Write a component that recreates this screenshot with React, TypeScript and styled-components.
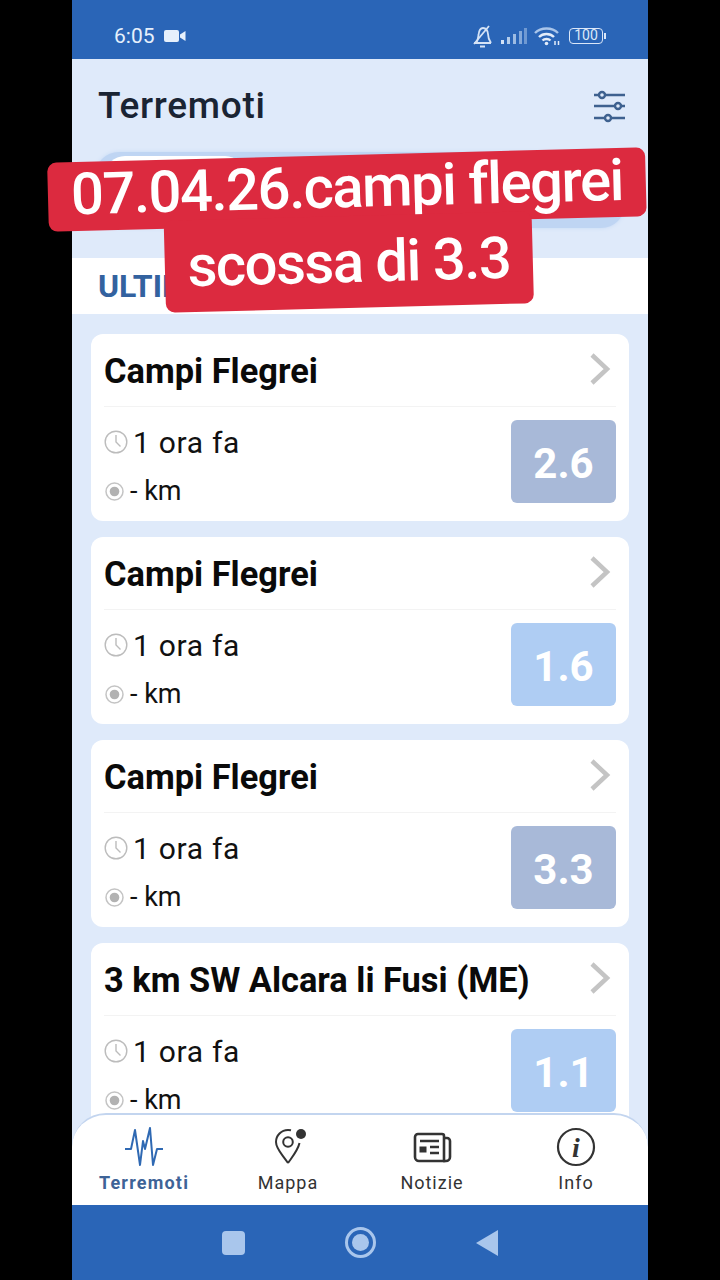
import { createGlobalStyle, styled } from 'styled-components';

const GlobalStyle = createGlobalStyle`
  html, body {
    margin: 0;
    padding: 0;
    background: #000;
    font-family: Roboto, "Liberation Sans", sans-serif;
  }
`;

const quakes = [
  { place: 'Campi Flegrei', value: '2.6', level: 'mid' },
  { place: 'Campi Flegrei', value: '1.6', level: 'low' },
  { place: 'Campi Flegrei', value: '3.3', level: 'mid' },
  { place: '3 km SW Alcara li Fusi (ME)', value: '1.1', level: 'low' },
];

function App() {
  return (
    <Screen>
      <GlobalStyle />
      <Phone>
        <StatusBar>
          <StatusLeft>
            <Clock>6:05</Clock>
            <svg width="22" height="14" viewBox="0 0 22 14">
              <rect x="0" y="1" width="15" height="12" rx="2" fill="#e6f0fc" />
              <path d="M16 5.500 21.500 2v10L16 8.500z" fill="#e6f0fc" />
            </svg>
          </StatusLeft>
          <StatusRight>
            <svg width="24" height="24" viewBox="0 0 24 24" fill="none" stroke="#d5e3f6" strokeWidth="1.800">
              <path d="M4 19h17M6 19c2-2 2-5 2.500-8C9 6 11 4 13 4c3 0 5 3 5 6 0 3 1 6 3 9M10 22.500h5" />
              <path d="M4 20 19 2" />
            </svg>
            <svg width="26" height="16" viewBox="0 0 26 16">
              <rect x="0" y="12" width="3" height="4" fill="#d3e2f6" />
              <rect x="6" y="9" width="3" height="7" fill="#b4cdec" />
              <rect x="12" y="6" width="3" height="10" fill="#9dbce3" />
              <rect x="18" y="3" width="3" height="13" fill="#84a9da" />
              <rect x="23" y="0" width="3" height="16" fill="#6f99d2" />
            </svg>
            <svg width="26" height="20" viewBox="0 0 26 20" fill="none" stroke="#e2ecfa" strokeWidth="2.400">
              <path d="M1 7c6-6 17-6 23 0" stroke="#a9c5ea" />
              <path d="M5 11c4-4 11-4 15 0" />
              <path d="M8.500 14.500c2-2 6-2 8 0" />
              <circle cx="12.500" cy="17.500" r="1.800" fill="#e2ecfa" stroke="none" />
              <path d="M21 15v4M24.500 15v4" strokeWidth="1.500" />
            </svg>
            <Battery>
              <BatteryBody>100</BatteryBody>
              <BatteryTip />
            </Battery>
          </StatusRight>
        </StatusBar>

        <Content>
          <Header>
            <Title>Terremoti</Title>
            <svg width="36" height="36" viewBox="0 0 36 36" fill="none" stroke="#3e618f" strokeWidth="2.400">
              <path d="M2 7h5M13 7h20M2 18h21M29 18h4M2 30h11M19 30h14" />
              <circle cx="10" cy="7" r="3" />
              <circle cx="26" cy="18" r="3" />
              <circle cx="16" cy="30" r="3" />
            </svg>
          </Header>

          <SegmentWrap>
            <Segment>
              <SegmentActive />
            </Segment>
          </SegmentWrap>

          <SectionBar>
            <SectionTitle>ULTIMI TERREMOTI</SectionTitle>
          </SectionBar>

          <List>
            {quakes.map((q, i) => (
              <Card key={i}>
                <CardHead>
                  <Place>{q.place}</Place>
                  <Chevron width="24" height="32" viewBox="0 0 24 32" fill="none" stroke="#c4c4c4" strokeWidth="4.500">
                    <path d="M4 2 19 16 4 30" />
                  </Chevron>
                </CardHead>
                <CardBody>
                  <Meta>
                    <MetaRow>
                      <svg width="24" height="24" viewBox="0 0 24 24" fill="none" stroke="#bcbcbc" strokeWidth="1.400">
                        <circle cx="12" cy="12" r="10.800" />
                        <path d="M12 5v7l4.500 4.500" />
                      </svg>
                      <TimeText>1 ora fa</TimeText>
                    </MetaRow>
                    <MetaRow>
                      <svg width="21" height="21" viewBox="0 0 21 21" fill="none" stroke="#c4c4c4" strokeWidth="1.500">
                        <circle cx="10.500" cy="10.500" r="8.500" />
                        <circle cx="10.500" cy="10.500" r="4.800" fill="#b2b2b2" stroke="none" />
                      </svg>
                      <DistanceText>- km</DistanceText>
                    </MetaRow>
                  </Meta>
                  <Magnitude $level={q.level}>{q.value}</Magnitude>
                </CardBody>
              </Card>
            ))}
          </List>
        </Content>

        <TabBar>
          <Tab>
            <TabIcon>
              <svg width="40" height="40" viewBox="0 0 40 40" fill="none" stroke="#2f69b3" strokeWidth="2" strokeLinejoin="round">
                <path d="M1 22h6l4-19 5 35 3-24 2 8 5-21 3 37 4-16h6" />
              </svg>
            </TabIcon>
            <TabLabel $active>Terremoti</TabLabel>
          </Tab>
          <Tab>
            <TabIcon>
              <svg width="40" height="40" viewBox="0 0 40 40" fill="none" stroke="#333" strokeWidth="2">
                <path d="M20 36C14 27 8 22 8 15A12 12 0 0 1 20 3c1 0 2 .1 3 .3M20 36c5-7 10-13 11.500-20" />
                <circle cx="20" cy="15" r="4.800" />
                <circle cx="33" cy="7" r="5" fill="#333" stroke="none" />
              </svg>
            </TabIcon>
            <TabLabel>Mappa</TabLabel>
          </Tab>
          <Tab>
            <TabIcon>
              <svg width="40" height="40" viewBox="0 0 40 40" fill="none" stroke="#333" strokeWidth="2.600">
                <path d="M6 7h24a2 2 0 0 1 2 2v25H7a4 4 0 0 1-4-4V10a3 3 0 0 1 3-3z" />
                <path d="M32 11h3a3 3 0 0 1 3 3v16a4 4 0 0 1-4 4h-3" />
                <rect x="8" y="20" width="6" height="5" fill="#333" strokeWidth="1" />
                <path d="M8 14h19M18 20h9M18 26h9" />
              </svg>
            </TabIcon>
            <TabLabel>Notizie</TabLabel>
          </Tab>
          <Tab>
            <TabIcon>
              <svg width="40" height="40" viewBox="0 0 40 40" fill="none">
                <circle cx="20" cy="20" r="18" stroke="#333" strokeWidth="2.200" />
                <InfoGlyph x="20" y="30" textAnchor="middle">i</InfoGlyph>
              </svg>
            </TabIcon>
            <TabLabel>Info</TabLabel>
          </Tab>
        </TabBar>

        <NavBar>
          <NavSquare />
          <NavCircle>
            <NavDot />
          </NavCircle>
          <svg width="22" height="28" viewBox="0 0 22 28">
            <path d="M22 1v26L0 14z" fill="#a9c6ec" />
          </svg>
        </NavBar>

        <Caption>
          <CaptionLine>07.04.26.campi flegrei</CaptionLine>
          <CaptionLine $second>scossa di 3.3</CaptionLine>
        </Caption>
      </Phone>
    </Screen>
  );
}

export default App;

const Screen = styled.div`
  width: 720px;
  height: 1280px;
  background: #000;
  display: flex;
  justify-content: center;
  overflow: hidden;
`;

const Phone = styled.div`
  position: relative;
  width: 576px;
  height: 1280px;
  display: flex;
  flex-direction: column;
  background: #dfeafa;
`;

const StatusBar = styled.div`
  height: 59px;
  flex-shrink: 0;
  background: #2a65b7;
  display: flex;
  align-items: center;
  justify-content: space-between;
  padding: 0 42px;
  box-sizing: border-box;
`;

const StatusLeft = styled.div`
  display: flex;
  align-items: center;
  gap: 9px;
  padding-top: 13px;
`;

const Clock = styled.span`
  font-size: 21px;
  color: #e6f0fc;
`;

const StatusRight = styled.div`
  display: flex;
  align-items: center;
  gap: 7px;
  padding-top: 13px;
`;

const Battery = styled.div`
  display: flex;
  align-items: center;
  margin-left: 2px;
`;

const BatteryBody = styled.div`
  width: 34px;
  height: 16px;
  box-sizing: border-box;
  border: 1.500px solid #dbe7f8;
  border-radius: 4px;
  color: #dbe7f8;
  font-size: 14px;
  line-height: 13px;
  text-align: center;
`;

const BatteryTip = styled.div`
  width: 2px;
  height: 6px;
  background: #dbe7f8;
  margin-left: 1px;
`;

const Content = styled.div`
  flex: 1;
  min-height: 0;
  overflow: hidden;
  display: flex;
  flex-direction: column;
  margin-bottom: -20px;
`;

const Header = styled.div`
  height: 93px;
  flex-shrink: 0;
  box-sizing: border-box;
  padding: 0 20px 0 26px;
  display: flex;
  align-items: center;
  justify-content: space-between;
`;

const Title = styled.h1`
  margin: 0;
  font-size: 37px;
  font-weight: 500;
  letter-spacing: 0.7px;
  color: #1a2433;
`;

const SegmentWrap = styled.div`
  height: 106px;
  flex-shrink: 0;
  box-sizing: border-box;
  padding: 0 23px 30px;
`;

const Segment = styled.div`
  height: 76px;
  border-radius: 24px;
  background: #bfd5f3;
  padding: 4px 10px;
  box-sizing: border-box;
  box-shadow: 0 0 4px #c6daf5;
`;

const SegmentActive = styled.div`
  width: 140px;
  height: 60px;
  background: #fff;
  border-radius: 20px;
`;

const SectionBar = styled.div`
  height: 56px;
  flex-shrink: 0;
  background: #fff;
  display: flex;
  align-items: center;
  padding-left: 26px;
`;

const SectionTitle = styled.h2`
  margin: 0;
  font-size: 32px;
  font-weight: 700;
  color: #33629f;
`;

const List = styled.div`
  padding: 20px 19px 0;
  display: flex;
  flex-direction: column;
  gap: 16px;
`;

const Card = styled.div`
  height: 187px;
  flex-shrink: 0;
  box-sizing: border-box;
  background: #fff;
  border-radius: 12px;
  padding: 0 13px;
`;

const CardHead = styled.div`
  height: 73px;
  box-sizing: border-box;
  padding: 2px 4px 0 0;
  border-bottom: 1px solid #f3f3f3;
  display: flex;
  align-items: center;
  justify-content: space-between;
`;

const Chevron = styled.svg`
  margin-bottom: 5px;
`;

const Place = styled.div`
  font-size: 34.400px;
  font-weight: 700;
  color: #0a0a0a;
`;

const CardBody = styled.div`
  display: flex;
  justify-content: space-between;
  padding-top: 13px;
`;

const Meta = styled.div`
  display: flex;
  flex-direction: column;
  gap: 9px;
  padding-top: 2px;
`;

const MetaRow = styled.div`
  height: 40px;
  display: flex;
  align-items: center;
  gap: 5px;
`;

const TimeText = styled.span`
  font-size: 30px;
  font-weight: 400;
  letter-spacing: 0.7px;
  color: #111;
`;

const DistanceText = styled.span`
  font-size: 27px;
  color: #111;
`;

const Magnitude = styled.div<{ $level: string }>`
  width: 105px;
  height: 83px;
  box-sizing: border-box;
  padding-top: 3px;
  border-radius: 6px;
  background: ${(p) => (p.$level === 'mid' ? '#a8b9d8' : '#afcdf3')};
  color: #fff;
  font-size: 42px;
  font-weight: 700;
  display: flex;
  align-items: center;
  justify-content: center;
`;

const TabBar = styled.div`
  position: relative;
  z-index: 1;
  height: 92px;
  flex-shrink: 0;
  box-sizing: border-box;
  background: #fff;
  border-top: 2px solid #c3d5ef;
  border-radius: 34px 34px 0 0;
  display: grid;
  grid-template-columns: repeat(4, 144px);
`;

const Tab = styled.div`
  display: flex;
  flex-direction: column;
  align-items: center;
  padding-top: 12px;
`;

const TabIcon = styled.div`
  height: 40px;
  display: flex;
`;

const TabLabel = styled.span<{ $active?: boolean }>`
  margin-top: 5px;
  font-size: 18px;
  letter-spacing: ${(p) => (p.$active ? '1.2px' : '1px')};
  font-weight: ${(p) => (p.$active ? 700 : 400)};
  color: ${(p) => (p.$active ? '#3e6397' : '#333')};
`;

const InfoGlyph = styled.text`
  font-family: 'Liberation Serif', serif;
  font-style: italic;
  font-weight: 700;
  font-size: 28px;
  fill: #333;
`;

const NavBar = styled.div`
  height: 75px;
  flex-shrink: 0;
  background: #2a65b7;
  display: flex;
  align-items: center;
  justify-content: center;
  gap: 100px;
`;

const NavSquare = styled.div`
  width: 23px;
  height: 24px;
  border-radius: 4px;
  background: #a9c6ec;
`;

const NavCircle = styled.div`
  width: 31px;
  height: 31px;
  box-sizing: border-box;
  border: 3px solid #a9c6ec;
  border-radius: 50%;
  display: flex;
  align-items: center;
  justify-content: center;
`;

const NavDot = styled.div`
  width: 17px;
  height: 17px;
  border-radius: 50%;
  background: #a9c6ec;
`;

const Caption = styled.div`
  position: absolute;
  z-index: 2;
  left: -24px;
  top: 155px;
  width: 600px;
  display: flex;
  flex-direction: column;
  align-items: center;
  transform: rotate(-1.5deg);
`;

const CaptionLine = styled.div<{ $second?: boolean }>`
  background: #dc2a3f;
  color: #fff;
  font-size: 58px;
  font-weight: 500;
  letter-spacing: -1.500px;
  border-radius: 9px;
  white-space: nowrap;
  text-align: center;
  width: ${(p) => (p.$second ? '368px' : '598px')};
  height: ${(p) => (p.$second ? '92px' : '69px')};
  line-height: ${(p) => (p.$second ? '92px' : '65px')};
  margin-top: ${(p) => (p.$second ? '-8px' : '0')};
`;
